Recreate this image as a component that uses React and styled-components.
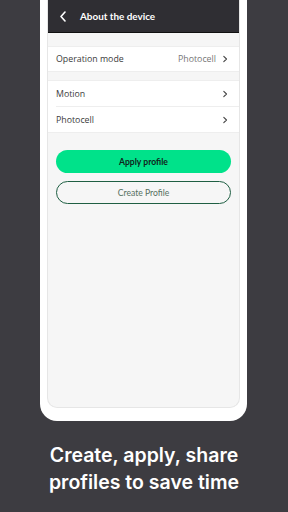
import React from 'react'
import styled, { createGlobalStyle } from 'styled-components'

const GlobalStyle = createGlobalStyle`
  html, body { margin: 0; padding: 0; }
  body { background: #3d3c41; }
  * { box-sizing: border-box; }
`;

const Page = styled.div`
  width: 288px;
  height: 512px;
  background: #3d3c41;
  display: flex;
  flex-direction: column;
  overflow: hidden;
`;

const Phone = styled.div`
  margin-left: 40px;
  width: 207px;
  height: 421px;
  background: #ffffff;
  border-radius: 0 0 17px 17px;
  padding: 0 7px 13px;
  display: flex;
  flex-direction: column;
`;

const Screen = styled.div`
  flex: 1;
  background: #f6f6f6;
  border-radius: 0 0 10px 10px;
  border: 1px solid #e6e6e6;
  border-top: none;
  overflow: hidden;
  display: flex;
  flex-direction: column;
  font-family: "Open Sans", "Noto Sans", sans-serif;
`;

const Header = styled.div`
  height: 33px;
  background: #2f2e33;
  border-bottom: 1px solid #111;
  display: flex;
  align-items: center;
  padding-left: 11px;
  gap: 13px;
  color: #fff;
`;

const Title = styled.span`
  font-family: "Lato", "Open Sans", sans-serif;
  font-weight: 700;
  font-size: 9.9px;
`;

const Section = styled.div`
  background: #fff;
  margin-top: ${p => p.$top}px;
  border-top: 1px solid #eeeeee;
  border-bottom: 1px solid #eeeeee;
`;

const Row = styled.div`
  height: ${p => p.$h}px;
  margin-left: 8px;
  padding-right: 10px;
  display: flex;
  align-items: center;
  justify-content: space-between;
  font-size: 8.8px;
  color: #3c3c3c;
  border-bottom: ${p => (p.$divider ? '1px solid #eeeeee' : 'none')};
`;

const Right = styled.span`
  display: flex;
  align-items: center;
  gap: 5px;
  color: #777;
`;

const Buttons = styled.div`
  margin: 17px 8px 0;
  display: flex;
  flex-direction: column;
  gap: 8px;
`;

const Button = styled.div`
  height: 23px;
  border-radius: 12px;
  display: flex;
  align-items: center;
  justify-content: center;
  font-family: "Lato", "Open Sans", sans-serif;
  font-size: 8.6px;
  font-weight: ${p => (p.$primary ? 700 : 400)};
  background: ${p => (p.$primary ? '#00e28a' : 'transparent')};
  color: ${p => (p.$primary ? '#10231a' : '#55705f')};
  border: ${p => (p.$primary ? 'none' : '1.2px solid #1f5f43')};
`;

const Caption = styled.div`
  margin-top: 21px;
  text-align: center;
  color: #ffffff;
  font-family: "Inter", "Lato", sans-serif;
  font-weight: 600;
  font-size: 19.5px;
  line-height: 27px;
`;

const Chevron = ({ size = 8, color = '#444', w = 1.1 }) => (
  <svg width={size} height={size} viewBox="0 0 8 8">
    <path d="M2.8 1.3 L5.5 4 L2.8 6.7" fill="none" stroke={color} strokeWidth={w} strokeLinecap="round" strokeLinejoin="round" />
  </svg>
);

const BackArrow = () => (
  <svg width="8" height="11" viewBox="0 0 8 11">
    <path d="M6 1 L2 5.5 L6 10" fill="none" stroke="#fff" strokeWidth="1.6" strokeLinecap="round" strokeLinejoin="round" />
  </svg>
);

const App = () => {
  return (
    <>
      <GlobalStyle />
      <Page>
        <Phone>
          <Screen>
            <Header>
              <BackArrow />
              <Title>About the device</Title>
            </Header>
            <Section $top={13}>
              <Row $h={24}>
                <span>Operation mode</span>
                <Right>Photocell <Chevron /></Right>
              </Row>
            </Section>
            <Section $top={8}>
              <Row $h={26} $divider>
                <span>Motion</span>
                <Chevron />
              </Row>
              <Row $h={25}>
                <span>Photocell</span>
                <Chevron />
              </Row>
            </Section>
            <Buttons>
              <Button $primary>Apply profile</Button>
              <Button>Create Profile</Button>
            </Buttons>
          </Screen>
        </Phone>
        <Caption>
          Create, apply, share<br />profiles to save time
        </Caption>
      </Page>
    </>
  )
}

export default App
